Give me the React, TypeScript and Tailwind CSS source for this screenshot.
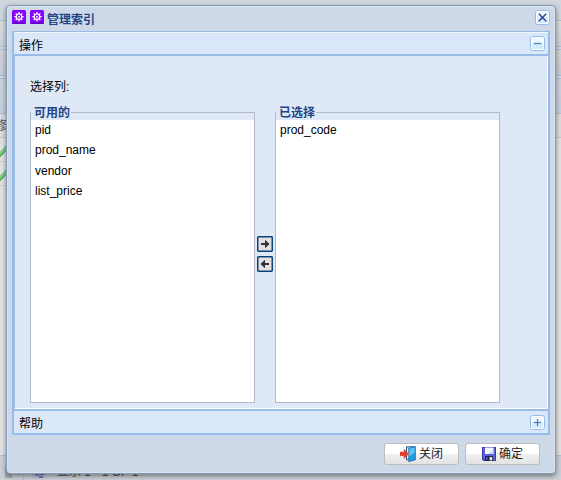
import React from "react";

const teeth = [0, 45, 90, 135, 180, 225, 270, 315];

function Gear() {
  return (
    <svg width="14" height="14" viewBox="0 0 14 14" className="block">
      <rect width="14" height="14" rx="1.5" fill="#8800ff" />
      <rect x="0.3" y="12.6" width="13.4" height="1.4" rx="0.7" fill="#5f00c4" />
      {teeth.map((angle) => (
        <rect key={angle} x="6.3" y="2" width="1.4" height="2" fill="#fff" transform={`rotate(${angle} 7 6.7)`} />
      ))}
      <circle cx="7" cy="6.7" r="2.7" fill="none" stroke="#fff" strokeWidth="1.2" />
      <circle cx="7" cy="6.7" r="1" fill="#fff" />
    </svg>
  );
}

function Tool({ kind }: { kind: "close" | "minus" | "plus" }) {
  return (
    <svg width="15" height="15" viewBox="0 0 15 15" className="block shrink-0">
      <rect x="0.5" y="0.5" width="14" height="14" rx="2.2" fill="#fff" stroke="#94bbec" />
      <rect x="2" y="2" width="11" height="11" fill="#eef7fe" />
      <rect x="2" y="7" width="11" height="6" fill="#d2ebfc" />
      {kind === "close" && <path d="M3.8 3.8 11.2 11.2M11.2 3.8 3.8 11.2" stroke="#2c43a0" strokeWidth="1.5" />}
      {kind !== "close" && <path d="M4 7.5H11" stroke="#4c7dab" strokeWidth="1.2" />}
      {kind === "plus" && <path d="M7.5 4V11" stroke="#4c7dab" strokeWidth="1.2" />}
    </svg>
  );
}

function Door() {
  return (
    <svg width="16" height="16" viewBox="0 0 16 16" className="block">
      <path d="M6.5 .8h8v13h-8z" fill="#d5effb" stroke="#17507c" strokeWidth="1" />
      <path d="M8.7 2.3 15.5.5v13.3l-6.8 2z" fill="#2499dc" stroke="#08649f" strokeWidth=".6" />
      <path d="M9.4 3.1 14.6 1.6v5L9.4 10.5z" fill="#64c4f3" />
      <path d="M0 6h4V3.2L8.5 8 4 12.5V9.7H0z" fill="#e8402a" stroke="#c33122" strokeWidth=".4" />
    </svg>
  );
}

function Disk() {
  return (
    <svg width="14" height="14" viewBox="0 0 14 14" className="block">
      <path d="M0 0h14v14H1.5L0 12.5z" fill="#3c3ca8" />
      <path d="M1 1h12v12H2L1 12z" fill="#5d62d3" />
      <path d="M3 .5h8.5V7H3z" fill="#f4f7ff" />
      <path d="M6 7 11.5 2.5V7z" fill="#cbd5f4" />
      <path d="M3 9h8v5H3z" fill="#22224e" />
      <path d="M7.6 10h2.6v3.4H7.6z" fill="#dfe3f0" />
      <path d="M4 10h1.6v3H4z" fill="#5a5f8d" />
    </svg>
  );
}

function ListBox({ title, items }: { title: string; items: string[] }) {
  return (
    <section className="flex h-[298px] w-[225px] flex-col">
      <div className="flex h-[15px] shrink-0">
        <div className="mt-[7px] w-px bg-[#b5b8c8]" />
        <h2 className="w-[40px] shrink-0 whitespace-nowrap pt-px pl-[3px] text-[12px] leading-[15px] font-bold text-[#234585]">{title}</h2>
        <div className="mt-[7px] flex-1 border-t border-r border-[#b5b8c8]" />
      </div>
      <ul className="flex-1 border-x border-b border-[#b5b8c8] bg-white pl-[4px] text-[12px] text-black">
        {items.map((item) => (
          <li key={item} className="h-[20.3px] leading-[20px]">{item}</li>
        ))}
      </ul>
    </section>
  );
}

function Arrow({ left }: { left?: boolean }) {
  return (
    <svg width="16" height="16" viewBox="0 0 16 16" className="block">
      <rect x=".75" y=".75" width="14.5" height="14.5" rx=".7" fill="#e2e2e2" stroke="#0f4378" strokeWidth="1.5" />
      <g transform={left ? "translate(16 0) scale(-1 1)" : undefined}>
        <path d="M4 7h4V3.7L12.5 8 8 12.3V9H4z" fill="#333" />
      </g>
    </svg>
  );
}

function Button({ icon, label }: { icon: React.ReactNode; label: string }) {
  return (
    <button className="flex h-[22px] w-[75px] items-center justify-center gap-[3px] rounded-[3px] border border-[#bcbcbc] bg-linear-to-b from-white from-45% via-[#efefef] via-55% to-[#e3e3e3] text-[12px] leading-[18px] text-[#222]">
      {icon}
      <span>{label}</span>
    </button>
  );
}

function Tick() {
  return (
    <svg width="8" height="23" className="block">
      <path d="M-1 18 9 7" stroke="#64b564" strokeWidth="4" />
      <path d="M-1 17 9 6" stroke="#8fdc8b" strokeWidth="1.2" />
    </svg>
  );
}

export default function App() {
  return (
    <main className="relative h-[480px] w-[561px] overflow-hidden bg-[#e2e2e2] font-['Liberation_Sans','Noto_Sans_CJK_SC',sans-serif]">
      <div className="flex h-full flex-col text-[12px] leading-[16px] text-[#555]">
        <div className="h-[20px] shrink-0 bg-[#d0d6dd]" />
        <div className="h-[27px] shrink-0 border-t border-b border-[#a9bedb] bg-linear-to-b from-[#dcdcdc] to-[#ccd1d8]" />
        <div className="h-[2px] shrink-0 bg-[#d2d9e2]" />
        <div className="h-[27px] shrink-0 border-t border-b border-[#a9bedb] bg-linear-to-b from-[#d2d5d9] to-[#c6ccd4]" />
        <div className="h-[2px] shrink-0 bg-[#d2d9e2]" />
        <div className="h-[36px] shrink-0 border-t border-b border-[#a9bedb] bg-linear-to-b from-[#ced3da] to-[#c4cfde]" />
        <div className="h-[24px] shrink-0 border-b border-[#c6c6c6] bg-[#dcdcdc] pt-[4px]">
          <span className="-ml-[5px]">修</span>
        </div>
        <div className="h-[24px] w-[8px] shrink-0 border-b border-[#cfcfcf]"><Tick /></div>
        <div className="h-[24px] w-[8px] shrink-0 border-b border-[#cfcfcf]"><Tick /></div>
        <div className="flex-1" />
        <div className="flex h-[25px] shrink-0 border-t border-[#adbfd7] bg-[#cbd0d7] pt-[8px]">
          <div className="mt-[4px] ml-[5px] h-[10px] w-[7px] bg-[#a9adb3]" />
          <div className="ml-[11px] h-[16px] w-px bg-[#aebfd5]" />
          <svg width="16" height="16" viewBox="0 0 16 16" className="ml-[7px] block">
            <rect width="16" height="15" fill="#c5c8d4" />
            <path d="M2 9 7 13V11h6V8H7V6zM8 12h4v2H8z" fill="#7773cc" />
          </svg>
          <span className="ml-[10px]">显示 1 - 1 OF 1</span>
        </div>
      </div>
      <section className="absolute top-[5px] left-[6px] flex h-[469px] w-[550px] flex-col rounded-[4px] border border-[#839db9] bg-[#cdd9e8] px-[5px] shadow-[0_2px_5px_rgba(0,0,0,0.45),inset_0_0_0_1px_#dae4f1]">
        <header className="flex h-[25px] shrink-0 items-center gap-[4px] pb-[3px]">
          <Gear />
          <Gear />
          <h1 className="mt-[5px] -ml-px text-[12px] leading-[18px] font-bold text-[#234585]">管理索引</h1>
          <div className="ml-auto"><Tool kind="close" /></div>
        </header>
        <div className="flex h-[404px] w-[538px] shrink-0 flex-col border-2 border-t border-[#99bbe8]">
          <div className="flex h-[24px] shrink-0 items-center justify-between border-t border-b-2 border-t-[#f1f6fd] border-b-[#99bbe8] bg-[#d9e7f8] pr-[3px] pl-[5px] text-[12px] text-black">
            <span className="mt-[4px]">操作</span>
            <Tool kind="minus" />
          </div>
          <div className="flex flex-1 flex-col rounded-b-[2px] border border-t-[#dfe8f6] border-r-white border-b-white border-l-[#99bbe8] bg-[#dfe8f6] pl-[15px]">
            <p className="mt-[22px] h-[16px] text-[12px] leading-[16px] text-black">选择列:</p>
            <div className="mt-[10px] flex">
              <ListBox title="可用的" items={["pid", "prod_name", "vendor", "list_price"]} />
              <div className="flex w-[20px] flex-col items-center gap-[4px] pt-[131px]">
                <Arrow />
                <Arrow left />
              </div>
              <ListBox title="已选择" items={["prod_code"]} />
            </div>
          </div>
          <div className="flex h-[24px] shrink-0 items-center justify-between border-t-2 border-[#99bbe8] bg-[#d9e7f8] pr-[3px] pl-[5px] text-[12px] text-black">
            <span className="mt-[3px]">帮助</span>
            <Tool kind="plus" />
          </div>
        </div>
        <footer className="flex justify-end gap-[6px] pt-[8px] pr-[10px]">
          <Button icon={<Door />} label="关闭" />
          <Button icon={<Disk />} label="确定" />
        </footer>
      </section>
    </main>
  );
}
